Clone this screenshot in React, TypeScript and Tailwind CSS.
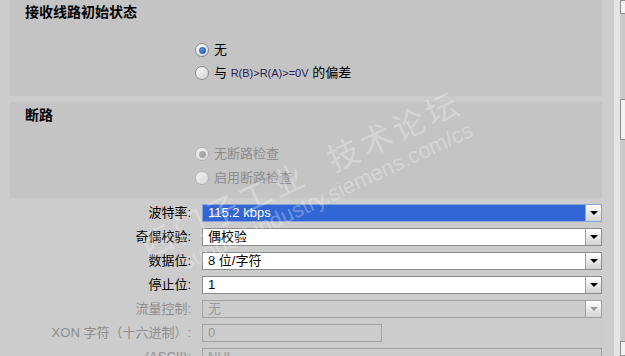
import React from 'react';

const font = { fontFamily: '"Liberation Sans", "Noto Sans CJK SC", sans-serif' };

const Radio = ({ checked, disabled }: { checked?: boolean; disabled?: boolean }) => (
  <span
    className={`flex h-[14px] w-[14px] items-center justify-center rounded-full border ${
      disabled ? 'border-[#b4b4b4] bg-gradient-to-br from-[#f4f4f4] to-[#d6d6d6]' : 'border-[#8a8a8a] bg-gradient-to-br from-white to-[#d0d0d0]'
    }`}
  >
    {checked && (
      <span
        className={`h-[7px] w-[7px] rounded-full ${
          disabled ? 'bg-[#a8a8a8]' : 'border border-[#1c4f9c] bg-gradient-to-br from-[#6aa6ee] to-[#1e5bb8]'
        }`}
      />
    )}
  </span>
);

const Arrow = ({ disabled }: { disabled?: boolean }) => (
  <div className="flex h-full w-[16px] items-center justify-center border-l border-[#a0a0a0] bg-gradient-to-b from-white to-[#d4d4d4]">
    <span
      className={`h-0 w-0 border-l-[4px] border-r-[4px] border-t-[4px] border-l-transparent border-r-transparent ${
        disabled ? 'border-t-[#9a9a9a]' : 'border-t-black'
      }`}
    />
  </div>
);

type Row = { label: string; value: string; kind: 'sel' | 'blue' | 'dis' | 'field'; w?: string };

const rows: Row[] = [
  { label: '波特率:', value: '115.2 kbps', kind: 'blue' },
  { label: '奇偶校验:', value: '偶校验', kind: 'sel' },
  { label: '数据位:', value: '8 位/字符', kind: 'sel' },
  { label: '停止位:', value: '1', kind: 'sel' },
  { label: '流量控制:', value: '无', kind: 'dis' },
  { label: 'XON 字符（十六进制）:', value: '0', kind: 'field', w: 'w-[180px]' },
  { label: '(ASCII):', value: 'NUL', kind: 'field', w: 'w-[400px]' },
];

const FormRow = ({ r }: { r: Row }) => {
  const dim = r.kind === 'dis' || r.kind === 'field';
  return (
    <div className="flex h-[24px] shrink-0 items-start">
      <div className={`w-[182px] pr-[1px] pt-[1px] text-right text-[13px] leading-[16px] ${dim ? 'text-[#8e8e8e]' : 'text-black'}`}>
        {r.label}
      </div>
      <div
        className={`ml-[10px] flex h-[18px] items-stretch border ${r.w ?? 'w-[400px]'} ${
          r.kind === 'blue'
            ? 'border-[#8aa5d8] bg-[#3166d4]'
            : r.kind === 'sel'
            ? 'border-[#8c8c8c] bg-white'
            : 'border-[#a2a2a2] bg-[#cccccc]'
        }`}
      >
        <div
          className={`flex-1 pl-[5px] text-[13px] leading-[16px] ${
            r.kind === 'blue' ? 'text-white' : dim ? 'text-[#9a9a9a]' : 'text-black'
          }`}
        >
          {r.value}
        </div>
        {r.kind !== 'field' && <Arrow disabled={r.kind === 'dis'} />}
      </div>
    </div>
  );
};

export default function App() {
  return (
    <div className="relative flex h-[356px] w-[625px] overflow-hidden bg-[#cccccc]" style={font}>
      <div className="flex w-[602px] shrink-0 flex-col pl-[10px]">
        {/* 接收线路初始状态 */}
        <section className="h-[96px] shrink-0 bg-[#c4c4c4] pl-[15px] pt-[3px]">
          <h2 className="text-[14px] font-bold leading-[18px] text-black">接收线路初始状态</h2>
          <div className="ml-[170px] mt-[22px] flex flex-col gap-[9px]">
            <label className="flex items-center gap-[5px] text-[13px] leading-[14px]">
              <Radio checked />
              <span>无</span>
            </label>
            <label className="flex items-center gap-[5px] text-[13px] leading-[14px]">
              <Radio />
              <span>
                与 <span className="text-[11px] text-[#2a1a5a]">R(B)&gt;R(A)&gt;=0V</span> 的偏差
              </span>
            </label>
          </div>
        </section>

        {/* 断路 */}
        <section className="mt-[6px] h-[96px] shrink-0 bg-[#c4c4c4] pl-[15px] pt-[4px]">
          <h2 className="text-[14px] font-bold leading-[18px] text-black">断路</h2>
          <div className="ml-[170px] mt-[23px] flex flex-col gap-[10px]">
            <label className="flex items-center gap-[5px] text-[13px] leading-[14px] text-[#8e8e8e]">
              <Radio checked disabled />
              <span>无断路检查</span>
            </label>
            <label className="flex items-center gap-[5px] text-[13px] leading-[14px] text-[#8e8e8e]">
              <Radio disabled />
              <span>启用断路检查</span>
            </label>
          </div>
        </section>

        <div className="mt-[6px] flex shrink-0 flex-col">
          {rows.map((r) => (
            <FormRow key={r.label} r={r} />
          ))}
        </div>
      </div>

      {/* right edge */}
      <div className="w-[12px] shrink-0 bg-[#cdcdcd]" />
      <div className="w-[6px] shrink-0 bg-[#e4e4e4]" />
      <div className="flex w-[5px] shrink-0 flex-col bg-[#c9c9c9]">
        <div className="h-[15px] border border-r-0 border-[#8c8c8c] bg-[#f2f2f2]" />
        <div className="mt-[85px] h-[44px] border border-r-0 border-[#8c8c8c] bg-[#f2f2f2]" />
        <div className="mt-[201px] h-[16px] border border-r-0 border-[#8c8c8c] bg-[#f2f2f2]" />
      </div>

      {/* watermark */}
      <div className="pointer-events-none absolute left-[148px] top-[230px] origin-left -rotate-[25deg] select-none whitespace-nowrap text-white/30">
        <div className="text-[32px] leading-[36px] tracking-[4px]">西门子工业&nbsp;&nbsp;技术论坛</div>
        <div className="pl-[30px] text-[22px] leading-[24px]">support.industry.siemens.com/cs</div>
      </div>
    </div>
  );
}
